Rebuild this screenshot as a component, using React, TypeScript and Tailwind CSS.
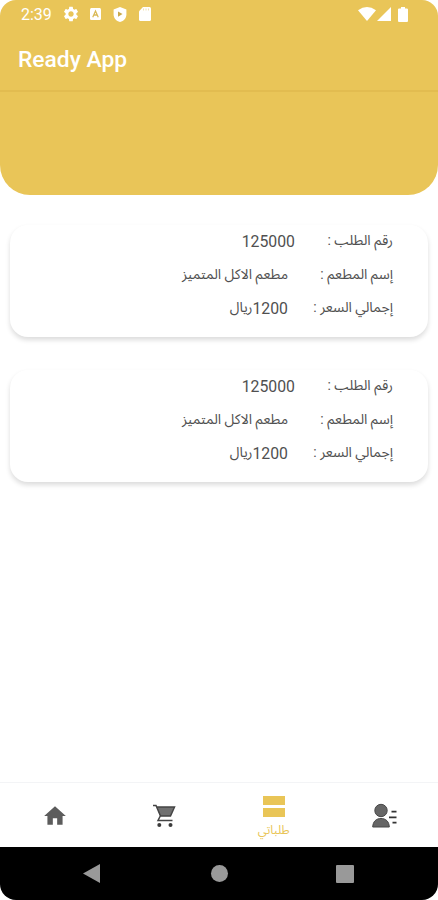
import { MdHome, MdSettings } from 'react-icons/md';

interface OrderRow {
  label: string;
  amount?: string;
  text?: string;
  labelWidth: string;
}

const ORDER_ROWS: OrderRow[] = [
  { label: 'رقم الطلب :', amount: '125000', labelWidth: 'w-[98px]' },
  { label: 'إسم المطعم :', text: 'مطعم الاكل المتميز', labelWidth: 'w-[105px]' },
  { label: 'إجمالي السعر :', amount: '1200', text: 'ريال', labelWidth: 'w-[105px]' },
];

function StatusBar() {
  return (
    <div className="flex h-7 items-center pl-[21px] pr-[30px] text-white">
      <span className="w-[41px] pt-px text-[16px] leading-7">2:39</span>
      <MdSettings size={18} />
      <svg width="11" height="12" viewBox="0 0 12 12" className="ml-[10px]" preserveAspectRatio="none">
        <rect width="12" height="12" rx="1.5" fill="currentColor" />
        <path d="M3 9.2 6 3l3 6.2M4.2 7h3.6" fill="none" stroke="#d9b955" strokeWidth="1.4" />
      </svg>
      <svg width="14" height="15" viewBox="0 0 14 15" className="ml-3">
        <path d="M7 0 13.4 2.4v5C13.4 11 10.8 13.9 7 15 3.2 13.9.6 11 .6 7.4v-5Z" fill="currentColor" />
        <path d="M5 4.5v5.2l4.5-2.6Z" fill="#c9a94d" />
      </svg>
      <svg width="12" height="14" viewBox="0 0 12 14" className="ml-3">
        <path d="M4 0h6.5Q12 0 12 1.5v11Q12 14 10.5 14h-9Q0 14 0 12.5V4.2Z" fill="currentColor" />
        <path d="M4.5 1.5v2M7 1.5v2M9.5 1.5v2" stroke="#f1e2b4" strokeWidth="1" />
      </svg>
      <div className="ml-auto flex items-center">
        <svg width="18" height="14" viewBox="0 0 18 14">
          <path d="M0 3.2Q9-3 18 3.2L9 14Z" fill="currentColor" />
        </svg>
        <svg width="14" height="14" viewBox="0 0 14 14" className="ml-px">
          <path d="M14 0v14H0Z" fill="currentColor" />
        </svg>
        <svg width="10" height="15" viewBox="0 0 9 15" className="ml-[7px]" preserveAspectRatio="none">
          <path d="M2.7 0h3.6v1.5H8q1 0 1 1V14q0 1-1 1H1q-1 0-1-1V2.5q0-1 1-1h1.7Z" fill="currentColor" />
        </svg>
      </div>
    </div>
  );
}

function OrderCard() {
  return (
    <div
      dir="rtl"
      className="mx-[10px] h-[112px] rounded-[18px] bg-white pr-[35px] shadow-[0_3px_5px_rgba(0,0,0,0.14)]"
    >
      {ORDER_ROWS.map((row) => (
        <div key={row.label} className="flex h-[33.5px] items-center whitespace-nowrap text-[14px] text-[#505050]">
          <span className={`${row.labelWidth} shrink-0 pb-0.5`}>{row.label}</span>
          {row.amount && <span className="text-[15.8px]">{row.amount}</span>}
          {row.text && <span className="pb-0.5">{row.text}</span>}
        </div>
      ))}
    </div>
  );
}

function CartIcon() {
  return (
    <svg width="24" height="24" viewBox="0 0 24 24">
      <path d="M5 3h17l-3.5 9H8Z" fill="#707070" />
      <path d="M1 1.5h3L8.5 12H18.5L22.5 3H5M8.3 12 6 16.5H20.5" fill="none" stroke="#444" strokeWidth="1.5" />
      <circle cx="7.3" cy="21" r="2" fill="#3c3c3c" />
      <circle cx="18.5" cy="21" r="2" fill="#3c3c3c" />
    </svg>
  );
}

function ProfileIcon() {
  return (
    <svg width="26" height="25" viewBox="0 0 26 25">
      <circle cx="9" cy="7.5" r="6.2" fill="#666" stroke="#484848" />
      <path d="M.7 24C1 18.5 4 15.5 9 15.5S17 18.5 17.3 24Z" fill="#666" stroke="#484848" />
      <path d="M19.5 8.7H24.5M17 14.3h7.5M20.5 19.7h4" stroke="#333" strokeWidth="1.8" />
    </svg>
  );
}

function BottomNav() {
  return (
    <nav className="grid h-[65px] grid-cols-4 border-t border-gray-100 bg-white">
      <div className="flex items-center justify-center pt-0.5">
        <MdHome size={26} color="#5c5c5c" />
      </div>
      <div className="flex items-center justify-center pt-0.5">
        <CartIcon />
      </div>
      <div className="flex flex-col items-center pt-[13px] text-[#e9c557]">
        <svg width="22" height="21" viewBox="0 0 22 21">
          <rect width="22" height="9" fill="currentColor" />
          <rect y="12" width="22" height="9" fill="currentColor" />
        </svg>
        <span className="mt-[3px] text-[12px] leading-5">طلباتي</span>
      </div>
      <div className="flex items-center justify-center pl-1">
        <ProfileIcon />
      </div>
    </nav>
  );
}

function SystemNav() {
  return (
    <div className="flex h-[53px] items-center bg-black">
      <svg width="17" height="19" viewBox="0 0 17 19" className="ml-[83px]">
        <path d="M17 0v19L0 9.5Z" fill="#999" />
      </svg>
      <div className="ml-[111px] size-[17px] rounded-full bg-[#999]" />
      <div className="ml-[108px] size-[18px] rounded-[1px] bg-[#999]" />
    </div>
  );
}

export default function App() {
  return (
    <div className="flex h-[900px] w-[438px] flex-col overflow-hidden rounded-[16px] bg-white font-['Roboto','Noto_Sans_Arabic','DejaVu_Sans',sans-serif]">
      <header className="h-[195px] shrink-0 rounded-b-[30px] bg-[#e9c558]">
        <StatusBar />
        <div className="flex h-16 items-center border-b-2 border-[#e2bc50] pl-[18px] pt-[3px] text-[22.8px] font-medium text-white">
          Ready App
        </div>
      </header>
      <main className="flex flex-1 flex-col gap-[33px] pt-[30px]">
        <OrderCard />
        <OrderCard />
      </main>
      <BottomNav />
      <SystemNav />
    </div>
  );
}
